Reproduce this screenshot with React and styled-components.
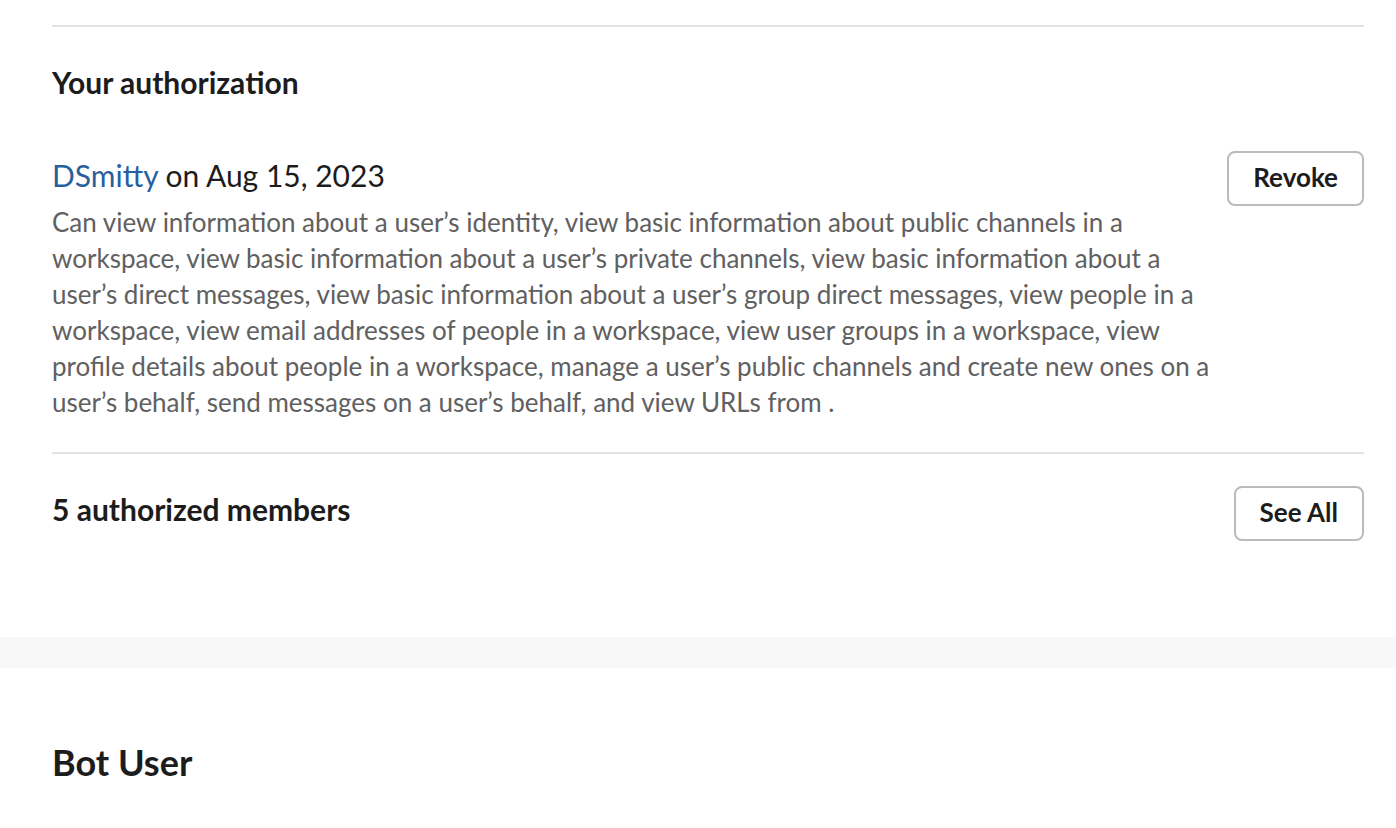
import React from "react";
import styled, { createGlobalStyle } from "styled-components";

const GlobalStyle = createGlobalStyle`
  body {
    margin: 0;
    background: #fff;
    font-family: Lato, "Noto Sans", sans-serif;
    color: #1d1c1d;
  }
`;

const Page = styled.div`
  width: 1396px;
  height: 828px;
  overflow: hidden;
`;

const Section = styled.section`
  padding: 25px 32px 0 52px;
`;

const Divider = styled.div`
  border-top: 2px solid #e2e2e2;
`;

const Title = styled.h2`
  margin: 0;
  font-size: 30px;
  font-weight: 700;
  line-height: 40px;
  padding: ${(p) => p.$pad || "0"};
`;

const AuthRow = styled.div`
  display: flex;
  justify-content: space-between;
  align-items: flex-start;
  gap: 10px;
  padding: 53px 0 32px;
`;

const AuthInfo = styled.div`
  flex: 1;
  max-width: 1166px;
`;

const UserLine = styled.div`
  font-size: 30px;
  line-height: 40px;
  margin-bottom: 9px;
`;

const UserLink = styled.a`
  color: #2a5f9e;
  text-decoration: none;
`;

const Description = styled.p`
  margin: 0;
  font-size: 26px;
  line-height: 36px;
  color: #616061;
`;

const Button = styled.button`
  flex-shrink: 0;
  height: 55px;
  padding: 0 24px 3px;
  border: 2px solid #bbbbbb;
  border-radius: 8px;
  background: #fff;
  font-family: Lato, "Noto Sans", sans-serif;
  font-size: 26px;
  font-weight: 700;
  color: #1d1c1d;
  margin-top: ${(p) => p.$top || "0"};
`;

const MembersRow = styled.div`
  display: flex;
  justify-content: space-between;
  align-items: flex-start;
  padding: 32px 0 0;
  height: 183px;
  box-sizing: border-box;
`;

const Band = styled.div`
  height: 31px;
  background: #f8f8f8;
`;

const BotTitle = styled.h2`
  margin: 0;
  padding: 71px 0 0 52px;
  font-size: 36px;
  font-weight: 700;
  line-height: 46px;
`;

export default function App() {
  return (
    <Page>
      <GlobalStyle />
      <Section>
        <Divider />
        <Title $pad="35px 0 0">Your authorization</Title>
        <AuthRow>
          <AuthInfo>
            <UserLine>
              <UserLink href="#">DSmitty</UserLink> on Aug 15, 2023
            </UserLine>
            <Description>
              Can view information about a user’s identity, view basic
              information about public channels in a workspace, view basic
              information about a user’s private channels, view basic
              information about a user’s direct messages, view basic
              information about a user’s group direct messages, view people in
              a workspace, view email addresses of people in a workspace, view
              user groups in a workspace, view profile details about people in
              a workspace, manage a user’s public channels and create new ones
              on a user’s behalf, send messages on a user’s behalf, and view
              URLs from .
            </Description>
          </AuthInfo>
          <Button $top="-4px">Revoke</Button>
        </AuthRow>
        <Divider />
        <MembersRow>
          <Title $pad="3px 0 0">5 authorized members</Title>
          <Button>See All</Button>
        </MembersRow>
      </Section>
      <Band />
      <BotTitle>Bot User</BotTitle>
    </Page>
  );
}
